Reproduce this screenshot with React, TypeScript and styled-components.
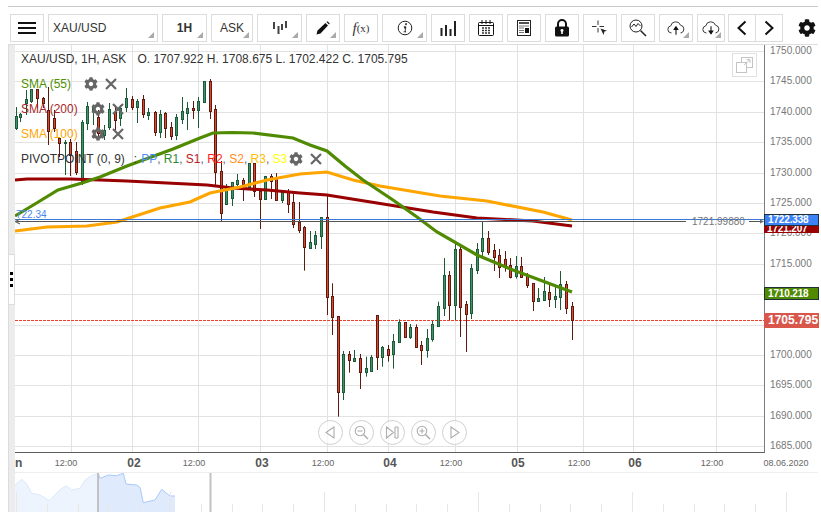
import React from "react";
import styled, { createGlobalStyle } from "styled-components";
import { FaCog } from "react-icons/fa";

const Global = createGlobalStyle`
  html, body { margin: 0; padding: 0; background: #fff; }
  body { font-family: "Liberation Sans", Arial, sans-serif; }
`;

const Page = styled.div`
  width: 810px;
  height: 520px;
  padding: 6px 3px 0 8px;
  overflow: hidden;
  background: #fff;
`;
const TopRule = styled.div`
  height: 1px;
  background: #c8c8c8;
`;
const Toolbar = styled.div`
  display: flex;
  gap: 4px;
  height: 28px;
  margin-top: 7px;
  padding-left: 2px;
  margin-bottom: 2px;
`;
const Btn = styled.div<{ $w: number; $pull?: number; $caret?: boolean; $bold?: boolean; $left?: boolean }>`
  position: relative;
  box-sizing: border-box;
  flex: none;
  width: ${(p) => p.$w}px;
  margin-left: ${(p) => p.$pull ?? 0}px;
  height: 28px;
  border: 1px solid #dcdcdc;
  display: flex;
  align-items: center;
  justify-content: ${(p) => (p.$left ? "flex-start" : "center")};
  padding-left: ${(p) => (p.$left ? 4 : 0)}px;
  font-size: 12px;
  font-weight: ${(p) => (p.$bold ? 700 : 400)};
  color: #333;
  &::after {
    content: "";
    display: ${(p) => (p.$caret ? "block" : "none")};
    position: absolute;
    right: 3px;
    bottom: 3px;
    width: 0;
    height: 0;
    border-style: solid;
    border-width: 0 0 6px 6px;
    border-color: transparent transparent #aaa transparent;
  }
`;
const Fx = styled.span`
  font-family: "Liberation Serif", serif;
  font-style: italic;
  font-size: 15px;
  color: #333;
`;
const FxArg = styled.span`
  font-family: "Liberation Serif", serif;
  font-size: 11px;
  color: #333;
`;
const GearSlot = styled.div`
  margin-left: 10px;
  width: 20px;
  height: 28px;
  display: flex;
  align-items: center;
  justify-content: center;
  color: #111;
`;
const Workspace = styled.div`
  display: flex;
  border-top: 1px solid #dedede;
  height: 467px;
`;
const LeftStrip = styled.div`
  position: relative;
  box-sizing: border-box;
  flex: none;
  width: 7px;
  background: #ececec;
  border-left: 1px solid #dcdcdc;
`;
const StripHandle = styled.div`
  position: absolute;
  top: 209px;
  left: -1px;
  width: 7px;
  height: 51px;
  box-sizing: border-box;
  background: #fff;
  border: 1px solid #dcdcdc;
  display: flex;
  flex-direction: column;
  align-items: center;
  justify-content: center;
  gap: 3px;
`;
const StripDot = styled.i`
  display: block;
  width: 3px;
  height: 3px;
  background: #000;
`;
const Main = styled.div`
  flex: 1;
  display: flex;
  flex-direction: column;
  min-width: 0;
`;
const ChartRow = styled.div`
  display: flex;
  height: 408px;
`;
const Plot = styled.div`
  position: relative;
  box-sizing: border-box;
  width: 750px;
  flex: none;
  height: 408px;
  border-right: 1px solid #7c7c7c;
  border-bottom: 1px solid #5e5e5e;
  overflow: hidden;
`;
const ChartSvg = styled.svg`
  display: block;
`;
const Legend = styled.div`
  position: absolute;
  top: 2px;
  left: 6px;
  display: flex;
  flex-direction: column;
  font-size: 12px;
  color: #333;
`;
const LegendRow = styled.div`
  display: flex;
  align-items: center;
  height: 25px;
  white-space: pre;
`;
const LegendHead = styled(LegendRow)`
  height: 24px;
`;
const Gap = styled.span<{ $w: number }>`
  display: inline-block;
  width: ${(p) => p.$w}px;
`;
const Tint = styled.span<{ $c: string }>`
  color: ${(p) => p.$c};
`;
const LegendGear = styled(FaCog)<{ $gap: number }>`
  margin-left: ${(p) => p.$gap}px;
  width: 14px;
  height: 14px;
  color: #666;
`;
const LegendX = styled.svg`
  margin-left: 7px;
  width: 12px;
  height: 12px;
  stroke: #666;
  stroke-width: 2.2;
  fill: none;
`;
const MaxButton = styled.div`
  position: absolute;
  top: 8px;
  right: 7px;
  box-sizing: border-box;
  width: 25px;
  height: 24px;
  border: 1px solid #e0e0e0;
  display: flex;
  align-items: center;
  justify-content: center;
  background: #fff;
`;
const NavGroup = styled.div`
  position: absolute;
  left: 303px;
  top: 375px;
  display: flex;
  gap: 6px;
`;
const NavCircle = styled.div`
  box-sizing: border-box;
  width: 25px;
  height: 25px;
  border: 1px solid #d0d0d0;
  border-radius: 50%;
  display: flex;
  align-items: center;
  justify-content: center;
  background: rgba(255, 255, 255, 0.7);
`;
const PriceAxis = styled.div`
  position: relative;
  flex: 1;
`;
const PriceTicks = styled.div`
  display: flex;
  flex-direction: column;
  margin-top: -9px;
`;
const PriceTick = styled.div`
  height: 30.4px;
  line-height: 30.4px;
  padding-left: 5px;
  font-size: 10px;
  color: #777;
`;
const Tag = styled.div<{ $top: number; $h: number; $bg: string; $big?: boolean; $bare?: boolean }>`
  position: absolute;
  left: -1px;
  top: ${(p) => p.$top}px;
  box-sizing: border-box;
  width: 55px;
  height: ${(p) => p.$h}px;
  line-height: ${(p) => p.$h - (p.$bare ? 1 : 2)}px;
  background: ${(p) => p.$bg};
  border: ${(p) => (p.$bare ? "0" : "1px solid #20303a")};
  color: #fff;
  font-size: ${(p) => (p.$big ? 12 : 10)}px;
  letter-spacing: ${(p) => (p.$big ? 0 : -0.15)}px;
  font-weight: 700;
  padding-left: ${(p) => (p.$big ? 4 : 3)}px;
  overflow: hidden;
`;
const TimeAxis = styled.div`
  display: flex;
  height: 19px;
  align-items: center;
  white-space: nowrap;
`;
const TimeCell = styled.div<{ $w: number; $major?: boolean }>`
  flex: none;
  width: ${(p) => p.$w}px;
  text-align: center;
  font-size: ${(p) => (p.$major ? 12 : 9)}px;
  font-weight: ${(p) => (p.$major ? 700 : 400)};
  color: ${(p) => (p.$major ? "#555" : "#666")};
`;
const Navigator = styled.div`
  box-sizing: border-box;
  height: 40px;
  border-top: 1px solid #eee;
`;

const GRID_X = [71, 132, 198, 260, 327, 388, 455, 517, 583, 633, 716];
const GRID_Y = Array.from({ length: 14 }, (_, i) => 51 + i * 30.4);
const PRICES = Array.from({ length: 14 }, (_, i) => (1750 - i * 5).toFixed(3));

type C = [number, number, number, number, number, "u" | "d"];
const early: C[] = [
  [16, 107, 116, 128, 130, "u"], [20, 113, 114, 117, 122, "u"], [26, 90, 99, 103, 115, "u"],
  [31, 89, 89, 101, 103, "u"], [37, 89, 89, 98, 108, "d"], [43, 97, 98, 103, 108, "d"],
  [48, 87, 110, 131, 145, "d"], [54, 110, 118, 128, 132, "d"], [59, 137, 138, 143, 157, "d"],
  [65, 140, 142, 143, 175, "u"], [70, 139, 142, 155, 176, "d"], [76, 142, 151, 172, 175, "d"],
  [82, 120, 122, 181, 185, "u"], [87, 102, 106, 123, 130, "u"], [93, 105, 107, 111, 125, "u"],
  [98, 110, 117, 133, 140, "d"], [104, 125, 130, 135, 140, "u"], [109, 103, 109, 127, 130, "u"],
  [115, 105, 112, 120, 130, "d"], [120, 105, 108, 118, 126, "u"], [126, 88, 98, 107, 112, "u"],
  [132, 96, 99, 107, 110, "d"], [137, 99, 101, 107, 123, "u"], [143, 95, 99, 114, 118, "d"],
  [148, 108, 112, 115, 120, "u"], [155, 111, 112, 132, 136, "d"], [160, 110, 114, 132, 138, "u"],
  [165, 112, 113, 128, 138, "d"], [171, 122, 127, 136, 140, "d"], [176, 114, 117, 135, 140, "u"],
  [182, 97, 111, 119, 124, "u"], [187, 102, 108, 113, 130, "u"], [193, 101, 108, 110, 119, "d"],
  [198, 97, 101, 110, 128, "u"], [204, 81, 81, 102, 102, "u"], [210, 79, 81, 111, 119, "d"],
  [215, 105, 109, 172, 185, "d"], [221, 161, 171, 213, 222, "d"], [226, 184, 187, 204, 205, "u"],
  [232, 182, 182, 198, 206, "u"], [237, 174, 180, 184, 188, "u"], [243, 178, 180, 184, 201, "d"],
  [249, 163, 163, 187, 190, "u"], [254, 163, 163, 191, 197, "d"], [260, 189, 191, 199, 229, "d"],
  [265, 176, 176, 199, 200, "u"], [271, 174, 176, 181, 199, "d"], [276, 173, 179, 200, 200, "d"],
  [282, 191, 191, 200, 203, "u"], [288, 189, 191, 204, 213, "d"], [293, 194, 202, 224, 228, "d"],
  [299, 202, 222, 230, 233, "d"],
];
const crop: [number, number, number, number, number, "u" | "d"][] = [
  [13, 138, 142, 202, 272, "d"], [31, 153, 186, 204, 207, "u"], [46, 153, 165, 191, 207, "u"],
  [64, 112, 112, 170, 207, "u"], [82, 45, 112, 352, 405, "d"], [97, 310, 349, 413, 465, "d"],
  [115, 408, 408, 635, 710, "d"], [130, 513, 522, 635, 660, "u"], [148, 513, 522, 540, 578, "d"],
  [163, 510, 534, 542, 542, "u"], [181, 522, 534, 575, 627, "d"], [199, 530, 564, 575, 590, "u"],
  [214, 525, 531, 572, 572, "u"], [232, 405, 405, 530, 570, "d"], [247, 498, 501, 531, 560, "u"],
  [265, 495, 507, 525, 545, "d"], [280, 462, 483, 521, 566, "u"], [298, 418, 427, 487, 487, "u"],
  [316, 426, 426, 470, 470, "d"], [331, 432, 441, 471, 477, "u"], [349, 433, 441, 500, 503, "d"],
  [364, 483, 495, 510, 555, "d"], [382, 447, 474, 510, 533, "u"], [397, 423, 432, 477, 485, "u"],
  [415, 365, 378, 437, 437, "u"], [433, 234, 285, 383, 408, "u"], [448, 273, 285, 374, 420, "d"],
  [466, 186, 207, 374, 420, "u"], [481, 198, 207, 380, 471, "d"], [499, 363, 372, 402, 516, "d"],
  [514, 252, 264, 398, 417, "u"], [532, 189, 207, 269, 282, "u"], [547, 125, 174, 212, 230, "u"],
  [565, 153, 174, 216, 225, "d"], [583, 192, 210, 231, 273, "d"], [598, 207, 225, 261, 294, "d"],
  [616, 213, 237, 261, 275, "d"], [631, 234, 255, 291, 295, "d"], [649, 228, 258, 289, 296, "u"],
  [664, 231, 258, 291, 291, "d"], [682, 279, 285, 315, 324, "d"], [700, 309, 309, 363, 393, "d"],
  [715, 324, 354, 362, 362, "u"], [733, 291, 333, 359, 359, "u"], [748, 315, 336, 357, 381, "d"],
  [766, 321, 348, 357, 384, "u"], [781, 273, 312, 352, 390, "u"], [799, 303, 312, 383, 402, "d"],
  [817, 366, 378, 420, 480, "d"],
];
const CANDLES: C[] = [
  ...early,
  ...crop.map(([x, a, b, c, d, k]): C => [300 + x / 3, 180 + a / 3, 180 + b / 3, 180 + c / 3, 180 + d / 3, k]),
];

const pts = (a: number[][]) => a.map((p) => p.join(",")).join(" ");
const SMA55 = [[15, 216], [35, 204], [58, 190], [82, 183], [100, 177], [127, 166], [173, 149], [200, 138], [213, 133], [232, 132.5], [253, 133], [293, 138], [310, 145], [327, 151], [345, 166], [363, 180], [393, 200], [417, 217], [437, 232], [477, 255], [513, 270], [572, 292]];
const SMA200 = [[15, 180], [27, 179], [70, 179], [100, 180], [127, 181], [167, 183], [207, 185], [233, 188], [267, 190], [300, 193], [327, 195], [377, 203], [433, 212], [477, 218], [533, 221], [572, 226]];
const SMA100 = [[15, 231], [47, 227], [87, 226], [117, 222], [160, 208], [190, 202], [210, 193], [240, 187], [267, 180], [300, 174], [327, 172], [353, 180], [380, 186], [440, 196], [487, 201], [543, 212], [572, 220]];

const CENTERS: [string, number, boolean][] = [
  ["12:00", 66, false], ["02", 134, true], ["12:00", 194, false], ["03", 262, true],
  ["12:00", 323, false], ["04", 390, true], ["12:00", 451, false], ["05", 518, true],
  ["12:00", 579, false], ["06", 635, true], ["12:00", 712, false], ["08.06.2020", 786, false],
];
const timeCells = (() => {
  let edge = 19;
  return CENTERS.map(([label, c, major]) => {
    const w = (c - edge) * 2;
    edge += w;
    return { label, w, major };
  });
})();

const AREA = [[45, 225], [65, 208], [80, 222], [95, 250], [120, 255], [148, 272], [185, 235], [200, 228], [215, 240], [240, 235], [255, 210], [275, 197], [295, 190], [300, 205], [325, 195], [350, 197], [370, 190], [378, 222], [410, 225], [420, 232], [430, 278], [465, 270], [485, 238], [510, 258], [525, 258]].map(([x, y]) => [x / 3, 410 + y / 3]);
const areaLeft = AREA.filter(([x]) => x <= 98.4);
const areaRight = AREA.filter(([x]) => x >= 98.3);

const NavChart = () => (
  <ChartSvg width={803} height={39} viewBox="15 473 803 39">
    <polygon points={pts([[15, 512], ...areaLeft, [98, 512]])} fill="#eef4fe" />
    <polygon points={pts([[98, 512], ...areaRight, [175, 512]])} fill="#dfebfd" />
    <polyline points={pts(areaLeft)} fill="none" stroke="#dbe8fc" strokeWidth={1} />
    <polyline points={pts(areaRight)} fill="none" stroke="#a9c9fb" strokeWidth={1} />
    {Array.from({ length: 26 }, (_, i) => {
      const x = Math.round(16 + i * 30.8) + 0.5;
      return <line key={i} x1={x} x2={x} y1={i % 5 === 0 ? 492 : 504} y2={512} stroke="#e9e6e4" />;
    })}
    <rect x={97} y={472} width={2} height={40} fill="#c2c2c2" />
    <rect x={209.5} y={472} width={2} height={40} fill="#c2c2c2" />
  </ChartSvg>
);

const Candles = () => (
  <g>
    {CANDLES.map(([x, hi, top, bot, lo, k], i) => {
      const cx = Math.floor(x) + 0.5;
      const dark = k === "u" ? "#1d5a38" : "#5f1a10";
      const fill = k === "u" ? "#41916a" : "#d8492f";
      return (
        <g key={i}>
          <line x1={cx} x2={cx} y1={hi} y2={lo} stroke={dark} />
          <rect x={cx - 1} y={Math.round(top) + 0.5} width={2} height={Math.max(Math.round(bot - top), 1)} fill={fill} stroke={dark} strokeWidth={1} />
        </g>
      );
    })}
  </g>
);

const PriceChart = () => (
  <ChartSvg width={749} height={407} viewBox="15 45 749 407">
    {GRID_Y.map((y) => (
      <line key={y} x1={15} x2={764} y1={Math.round(y) + 0.5} y2={Math.round(y) + 0.5} stroke="#e2e2e2" />
    ))}
    {GRID_X.map((x) => (
      <line key={x} x1={x + 0.5} x2={x + 0.5} y1={45} y2={452} stroke="#e2e2e2" />
    ))}
    <line x1={15} x2={764} y1={320.5} y2={320.5} stroke="#e8412f" strokeDasharray="3 1" />
    <Candles />
    <polyline points={pts(SMA200)} fill="none" stroke="#990000" strokeWidth={3.2} />
    <polyline points={pts(SMA100)} fill="none" stroke="#ffa500" strokeWidth={3.2} />
    <polyline points={pts(SMA55)} fill="none" stroke="#4f8a00" strokeWidth={3.2} />
    <line x1={15} x2={764} y1={219.5} y2={219.5} stroke="#3a78d8" />
    <line x1={15} x2={686} y1={221.5} y2={221.5} stroke="#555" />
    <line x1={749} x2={760} y1={221.5} y2={221.5} stroke="#555" />
    <path d="M760 219.5 L764 221.5 L760 223.5Z" fill="#666" />
    <path d="M20 219 L15.5 221.5 L20 224" fill="none" stroke="#666" strokeWidth={1.2} />
    <text x={16} y={218} fontSize={10} fill="#4a86ee" fontFamily="Liberation Sans">722.34</text>
    <text x={692} y={224.5} fontSize={10} fill="#777" fontFamily="Liberation Sans">1721.99880</text>
  </ChartSvg>
);

const Cross = () => (
  <LegendX viewBox="0 0 12 12">
    <path d="M1 1 L11 11 M11 1 L1 11" />
  </LegendX>
);

const BTN_ICON = { fill: "none", stroke: "#111" };

const Icons = {
  Menu: () => (
    <svg width={18} height={14} viewBox="0 0 18 14"><path d="M0 2H18M0 7H18M0 12H18" stroke="#111" strokeWidth={2} /></svg>
  ),
  Candle: () => (
    <svg width={16} height={14} viewBox="0 0 16 14" fill="#444">
      <rect x={1} y={1} width={2} height={7} /><rect x={5.5} y={5} width={2} height={8} />
      <rect x={9} y={3} width={2} height={6} /><rect x={13} y={0} width={2} height={7} />
    </svg>
  ),
  Pencil: () => (
    <svg width={14} height={14} viewBox="0 0 14 14"><path d="M0.5 13.5 L1.5 9.5 L9.5 2 L12 4.5 L4.5 12.5Z M10.5 1 L11.5 0.3 L13.7 2.4 L13 3.5Z" fill="#111" /></svg>
  ),
  Info: () => (
    <svg width={16} height={16} viewBox="0 0 16 16">
      <circle cx={8} cy={8} r={6.8} fill="none" stroke="#222" strokeWidth={1} />
      <path d="M8.6 3.6 l1 0 -.2 1.2 -1 0Z M6.8 6.8 h2.2 l-1.1 5 h1 M6.6 11.8 h2.4" fill="#222" stroke="#222" strokeWidth={0.7} />
    </svg>
  ),
  Bars: () => (
    <svg width={16} height={16} viewBox="0 0 16 16" fill="#222">
      <rect x={0.5} y={8} width={2} height={8} /><rect x={5} y={5} width={2} height={11} />
      <rect x={9.5} y={9} width={2} height={7} /><rect x={14} y={1} width={2} height={15} />
    </svg>
  ),
  Calendar: () => (
    <svg width={18} height={18} viewBox="0 0 18 18">
      <rect x={1.5} y={3.5} width={15} height={13} rx={1} {...BTN_ICON} strokeWidth={1} />
      <path d="M1.5 6.5H16.5M5 1V5M9 1V5M13 1V5" stroke="#111" fill="none" />
      <path d="M5 9h2M8 9h2M11 9h2M5 11.5h2M8 11.5h2M11 11.5h2M5 14h2M8 14h2M11 14h2" stroke="#333" strokeWidth={1.4} />
    </svg>
  ),
  News: () => (
    <svg width={14} height={16} viewBox="0 0 14 16">
      <rect x={0.5} y={0.5} width={13} height={15} fill="none" stroke="#222" />
      <path d="M2 3H12" stroke="#222" strokeWidth={1.6} />
      <path d="M2 6H12M2 8H7M2 10.5H7M2 12.5H7" stroke="#777" />
      <rect x={8} y={8} width={4} height={5} fill="#111" />
    </svg>
  ),
  Lock: () => (
    <svg width={14} height={18} viewBox="0 0 14 18">
      <path d="M3 8V5a4 4 0 0 1 8 0V8" fill="none" stroke="#111" strokeWidth={2} />
      <path fillRule="evenodd" d="M1.5 7.5h11a1.5 1.5 0 0 1 1.5 1.5v7a1.5 1.5 0 0 1 -1.5 1.5h-11a1.5 1.5 0 0 1 -1.5 -1.5v-7a1.5 1.5 0 0 1 1.5 -1.5Z M7 10a1.5 1.5 0 0 0 -.8 2.8V15h1.6v-2.2A1.5 1.5 0 0 0 7 10Z" fill="#111" />
    </svg>
  ),
  Crosshair: () => (
    <svg width={16} height={16} viewBox="0 0 16 16">
      <path d="M6 0.5V5M6 8V12.5M0 6.5H4.5M7.5 6.5H12" stroke="#333" />
      <path d="M8.5 8.5L15 10.8L12.4 11.6L11.6 15Z" fill="#222" />
    </svg>
  ),
  ZoomChart: () => (
    <svg width={18} height={18} viewBox="0 0 18 18">
      <circle cx={7} cy={7} r={6} fill="none" stroke="#222" />
      <path d="M2.5 8L5 5L7 7.5L9 4.5L11.5 7" fill="none" stroke="#222" />
      <path d="M11.5 11.5L17 17" stroke="#222" strokeWidth={1.5} />
    </svg>
  ),
  Cloud: ({ down }: { down?: boolean }) => (
    <svg width={18} height={16} viewBox="0 0 20 17">
      <path d="M5 14H4.5a4 4 0 0 1 -.3 -7.9 A5.6 5.6 0 0 1 15 5.4 A4.4 4.4 0 0 1 15.5 14H15" fill="none" stroke="#222" />
      {down ? (
        <path d="M10 6.5V14M8 12L10 15L12 12Z" stroke="#111" strokeWidth={1.2} fill="#111" />
      ) : (
        <path d="M10 16V8M8 10L10 7L12 10Z" stroke="#111" strokeWidth={1.2} fill="#111" />
      )}
    </svg>
  ),
  Chevron: ({ right }: { right?: boolean }) => (
    <svg width={10} height={16} viewBox="0 0 10 16">
      <path d={right ? "M1.5 1.5L8.5 8L1.5 14.5" : "M8.5 1.5L1.5 8L8.5 14.5"} fill="none" stroke="#111" strokeWidth={2} />
    </svg>
  ),
};

const MaxIcon = () => (
  <svg width={17} height={16} viewBox="0 0 17 16" fill="none" stroke="#c4c4c4">
    <rect x={5.5} y={0.5} width={11} height={10} />
    <rect x={0.5} y={5.5} width={10} height={10} fill="#fff" />
    <path d="M8 8L14 2.5M10.5 2.5H14V6" />
  </svg>
);

const NavIcon = ({ kind }: { kind: "l" | "minus" | "end" | "plus" | "r" }) => (
  <svg width={15} height={15} viewBox="0 0 15 15" fill="none" stroke="#adadad" strokeWidth={1.1}>
    {kind === "l" && <path d="M11 2L3 7.5L11 13Z" />}
    {kind === "r" && <path d="M4 2L12 7.5L4 13Z" />}
    {kind === "end" && <path d="M1.5 2L8.5 7.5L1.5 13Z M10 2V13 M13 2V13 M10 2H13 M10 13H13" />}
    {(kind === "minus" || kind === "plus") && (
      <>
        <circle cx={6} cy={6} r={4.8} />
        <path d="M9.5 9.5L14 14" strokeWidth={1.5} />
        <path d={kind === "plus" ? "M3.5 6H8.5M6 3.5V8.5" : "M3.5 6H8.5"} />
      </>
    )}
  </svg>
);

const Comma = () => <Tint $c="#666">, </Tint>;

export default function App() {
  return (
    <>
      <Global />
      <Page>
        <TopRule />
        <Toolbar>
          <Btn $w={34}><Icons.Menu /></Btn>
          <Btn $w={110} $left $caret>XAU/USD</Btn>
          <Btn $w={45} $bold $caret>1H</Btn>
          <Btn $w={42} $caret>ASK</Btn>
          <Btn $w={45} $caret><Icons.Candle /></Btn>
          <Btn $w={34} $caret><Icons.Pencil /></Btn>
          <Btn $w={34}><Fx>f</Fx><FxArg>(x)</FxArg></Btn>
          <Btn $w={45} $caret><Icons.Info /></Btn>
          <Btn $w={34}><Icons.Bars /></Btn>
          <Btn $w={34}><Icons.Calendar /></Btn>
          <Btn $w={34}><Icons.News /></Btn>
          <Btn $w={34}><Icons.Lock /></Btn>
          <Btn $w={34}><Icons.Crosshair /></Btn>
          <Btn $w={34}><Icons.ZoomChart /></Btn>
          <Btn $w={34} $caret><Icons.Cloud /></Btn>
          <Btn $w={28} $caret><Icons.Cloud down /></Btn>
          <Btn $w={28} $pull={-1}><Icons.Chevron /></Btn>
          <Btn $w={28} $pull={-5}><Icons.Chevron right /></Btn>
          <GearSlot><FaCog size={18} /></GearSlot>
        </Toolbar>
        <Workspace>
          <LeftStrip>
            <StripHandle><StripDot /><StripDot /><StripDot /></StripHandle>
          </LeftStrip>
          <Main>
            <ChartRow>
              <Plot>
                <PriceChart />
                <Legend>
                  <LegendHead>XAU/USD, 1H, ASK<Gap $w={11} />O. 1707.922 H. 1708.675 L. 1702.422 C. 1705.795</LegendHead>
                  <LegendRow><Tint $c="#4f9000">SMA (55)</Tint><LegendGear $gap={13} /><Cross /></LegendRow>
                  <LegendRow><Tint $c="#a82828">SMA (200)</Tint><LegendGear $gap={13} /><Cross /></LegendRow>
                  <LegendRow><Tint $c="#ffa500">SMA (100)</Tint><LegendGear $gap={13} /><Cross /></LegendRow>
                  <LegendRow>
                    PIVOTPOINT (0, 9)<Gap $w={9} />:<Gap $w={4} /><Tint $c="#4a8ffa">PP</Tint><Comma />
                    <Tint $c="#2e8b2e">R1</Tint><Comma />
                    <Tint $c="#b22222">S1</Tint><Comma />
                    <Tint $c="#ff1c1c">R2</Tint><Comma />
                    <Tint $c="#ff8c1a">S2</Tint><Comma />
                    <Tint $c="#ffc000">R3</Tint><Comma />
                    <Tint $c="#ffff00">S3</Tint>
                    <LegendGear $gap={2} /><Cross />
                  </LegendRow>
                </Legend>
                <MaxButton><MaxIcon /></MaxButton>
                <NavGroup>
                  <NavCircle><NavIcon kind="l" /></NavCircle>
                  <NavCircle><NavIcon kind="minus" /></NavCircle>
                  <NavCircle><NavIcon kind="end" /></NavCircle>
                  <NavCircle><NavIcon kind="plus" /></NavCircle>
                  <NavCircle><NavIcon kind="r" /></NavCircle>
                </NavGroup>
              </Plot>
              <PriceAxis>
                <PriceTicks>
                  {PRICES.map((p) => <PriceTick key={p}>{p}</PriceTick>)}
                </PriceTicks>
                <Tag $top={180} $h={8} $bg="#990000" $bare>1721.207</Tag>
                <Tag $top={169} $h={12} $bg="#3b82f6">1722.338</Tag>
                <Tag $top={242} $h={13} $bg="#4f8a00">1710.218</Tag>
                <Tag $top={268} $h={15} $bg="#d9564a" $big $bare>1705.795</Tag>
              </PriceAxis>
            </ChartRow>
            <TimeAxis>
              <TimeCell $w={4} $major>n</TimeCell>
              {timeCells.map((t, i) => (
                <TimeCell key={i} $w={t.w} $major={t.major}>{t.label}</TimeCell>
              ))}
            </TimeAxis>
            <Navigator><NavChart /></Navigator>
          </Main>
        </Workspace>
      </Page>
    </>
  );
}
